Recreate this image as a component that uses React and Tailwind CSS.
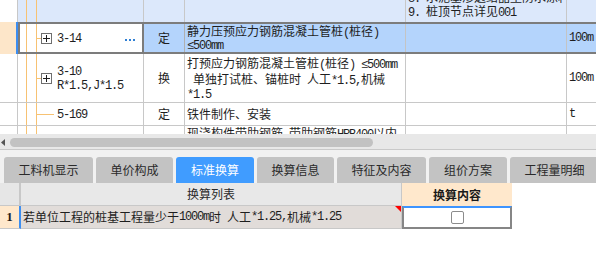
import React from "react";

const MONO =
  "[font-family:'Liberation_Mono',monospace] text-[12px] tracking-[-1.2px] whitespace-pre";

function T({ t }) {
  const parts = t.split(/([\x20-\x7E\u2264]+)/);
  return (
    <>
      {parts.map((p, i) =>
        i % 2 === 1 ? (
          <span key={i} className={MONO}>
            {p}
          </span>
        ) : (
          <React.Fragment key={i}>{p}</React.Fragment>
        )
      )}
    </>
  );
}

function PlusBox() {
  return (
    <svg width="11" height="11" viewBox="0 0 11 11" className="shrink-0">
      <rect x="0.5" y="0.5" width="10" height="10" fill="white" stroke="#6e6e6e" />
      <path d="M2 5.5H9M5.5 2V9" stroke="#1e1e1e" strokeWidth="1" />
    </svg>
  );
}

function Tree({ sel, children }) {
  return (
    <div className="flex h-full w-full">
      <div
        className={`${sel ? "w-[7px]" : "w-[9px]"} shrink-0 border-r border-[#f7c273]`}
      />
      <div className="w-[10px] shrink-0 border-r border-[#f7c273]" />
      {children}
    </div>
  );
}

const B = "border-[#c8c8c8]";

function Tab({ w, active, children }) {
  return (
    <div
      className={`${w} h-[26px] shrink-0 rounded-t-[3px] flex items-center justify-center ${
        active ? "bg-[#409cff] text-white" : "bg-[#c3c3c3] text-[#2a2a2a]"
      }`}
    >
      {children}
    </div>
  );
}

export default function App() {
  return (
    <div className="w-[596px] h-[276px] overflow-hidden bg-white text-[#1e1e1e] text-[12px] [font-family:'Noto_Sans_CJK_SC',sans-serif] flex flex-col">
      {/* top grid */}
      <div className="h-[134px] shrink-0 overflow-hidden flex flex-col">
        {/* row 0 (scrolled, partly visible) */}
        <div className="flex h-[22px] shrink-0">
          <div className={`w-[18px] shrink-0 border-r ${B} bg-white`} />
          <div className="flex flex-1 bg-[#dce8fb]">
            <div className={`w-[126px] shrink-0 border-r ${B}`}>
              <Tree />
            </div>
            <div className={`w-[41px] shrink-0 border-r ${B}`} />
            <div className={`w-[221px] shrink-0 border-r ${B}`} />
            <div
              className={`w-[161px] shrink-0 border-r ${B} overflow-hidden flex flex-col justify-end pb-[4px] pl-[2px]`}
            >
              <div className="h-[15px] leading-[15px] whitespace-nowrap shrink-0">
                <T t="8. 水泥基渗透结晶型防水涂料" />
              </div>
              <div className="h-[14px] leading-[14px] whitespace-nowrap shrink-0">
                <T t="9. 桩顶节点详见001" />
              </div>
            </div>
            <div className="flex-1" />
          </div>
        </div>

        {/* selected row 3-14 */}
        <div className="flex h-[32px] shrink-0">
          <div className="w-[18px] shrink-0 bg-[#fde6c9] border-r-2 border-[#3c8df0]" />
          <div className="w-[126px] shrink-0 border-2 border-[#7c7c7c] bg-white">
            <Tree sel>
              <div className="flex items-center flex-1">
                <div className="w-[4px] h-px bg-[#f7c273] shrink-0" />
                <PlusBox />
                <div className="ml-[5px] leading-[14px]">
                  <T t="3-14" />
                </div>
                <div className="flex-1" />
                <div className="flex gap-[2px] mr-[7px] mt-[3px]">
                  <div className="w-[2px] h-[2px] bg-[#2f7fd3]" />
                  <div className="w-[2px] h-[2px] bg-[#2f7fd3]" />
                  <div className="w-[2px] h-[2px] bg-[#2f7fd3]" />
                </div>
              </div>
            </Tree>
          </div>
          <div className="flex flex-1 bg-[#b4d4fc] border-y-2 border-[#7c7c7c]">
            <div className="w-[41px] shrink-0 border-r border-[#b0b0b0] flex items-center justify-center">
              定
            </div>
            <div className="w-[221px] shrink-0 border-r border-[#c4c4c4] pl-[2px] whitespace-nowrap overflow-hidden">
              <div className="h-[14px] leading-[14px]">
                <T t="静力压预应力钢筋混凝土管桩(桩径)" />
              </div>
              <div className="h-[12px] leading-[12px]">
                <T t="≤500mm" />
              </div>
            </div>
            <div className="w-[161px] shrink-0 border-r border-[#c4c4c4]" />
            <div className="flex-1 flex items-center pl-[2px]">
              <T t="100m" />
            </div>
          </div>
        </div>

        {/* row 3-10 */}
        <div className={`flex h-[49px] shrink-0 border-b ${B}`}>
          <div className={`w-[18px] shrink-0 border-r ${B}`} />
          <div className={`w-[126px] shrink-0 border-r ${B}`}>
            <Tree>
              <div className="flex items-center flex-1">
                <div className="w-[4px] h-px bg-[#f7c273] shrink-0" />
                <PlusBox />
                <div className="ml-[5px] mb-[2px]">
                  <div className="h-[14px] leading-[14px]">
                    <T t="3-10" />
                  </div>
                  <div className="h-[14px] leading-[14px]">
                    <T t="R*1.5,J*1.5" />
                  </div>
                </div>
              </div>
            </Tree>
          </div>
          <div className={`w-[41px] shrink-0 border-r ${B} flex items-center justify-center`}>
            换
          </div>
          <div className={`w-[221px] shrink-0 border-r ${B} pl-[2px] whitespace-nowrap overflow-hidden`}>
            <div className="h-[17px] leading-[17px]">
              <T t="打预应力钢筋混凝土管桩(桩径) ≤500mm" />
            </div>
            <div className="h-[15px] leading-[15px]">
              <T t=" 单独打试桩、锚桩时 人工*1.5,机械" />
            </div>
            <div className="h-[14px] leading-[14px]">
              <T t="*1.5" />
            </div>
          </div>
          <div className={`w-[161px] shrink-0 border-r ${B}`} />
          <div className="flex-1 flex items-center pl-[2px]">
            <T t="100m" />
          </div>
        </div>

        {/* row 5-169 */}
        <div className={`flex h-[23px] shrink-0 border-b ${B}`}>
          <div className={`w-[18px] shrink-0 border-r ${B}`} />
          <div className={`w-[126px] shrink-0 border-r ${B}`}>
            <Tree>
              <div className="flex items-center flex-1">
                <div className="w-[17px] h-px bg-[#f7c273] shrink-0" />
                <div className="ml-[3px]">
                  <T t="5-169" />
                </div>
              </div>
            </Tree>
          </div>
          <div className={`w-[41px] shrink-0 border-r ${B} flex items-center justify-center`}>
            定
          </div>
          <div className={`w-[221px] shrink-0 border-r ${B} pl-[2px] flex items-center whitespace-nowrap overflow-hidden`}>
            <T t="铁件制作、安装" />
          </div>
          <div className={`w-[161px] shrink-0 border-r ${B}`} />
          <div className="flex-1 flex items-center pl-[2px]">
            <T t="t" />
          </div>
        </div>

        {/* partial row */}
        <div className="flex flex-1 min-h-[20px]">
          <div className={`w-[18px] shrink-0 border-r ${B}`} />
          <div className={`w-[126px] shrink-0 border-r ${B}`}>
            <Tree />
          </div>
          <div className={`w-[41px] shrink-0 border-r ${B}`} />
          <div className={`w-[221px] shrink-0 border-r ${B} pl-[2px] whitespace-nowrap overflow-hidden`}>
            <div className="h-[14px] leading-[14px]">
              <T t="现浇构件带肋钢筋 带肋钢筋HRB400以内" />
            </div>
          </div>
          <div className={`w-[161px] shrink-0 border-r ${B}`} />
          <div className="flex-1" />
        </div>
      </div>

      {/* horizontal scrollbar */}
      <div className="h-[16px] shrink-0 bg-[#e8e8e8] border-b border-[#c9c9c9] flex items-center">
        <svg width="5" height="7" viewBox="0 0 5 7" className="ml-[1px] mt-[1px] shrink-0">
          <polygon points="4,0 0,3.5 4,7" fill="#555" />
        </svg>
        <div className="ml-[4px] w-[363px] h-[9px] rounded-full bg-[#c2c2c2] mt-[1px]" />
      </div>

      {/* tabs */}
      <div className="h-[33px] shrink-0 bg-[#f1f1f1] pt-[7px] pl-[4px] flex gap-[3px] overflow-hidden">
        <Tab w="w-[89px]">工料机显示</Tab>
        <Tab w="w-[77px]">单价构成</Tab>
        <Tab w="w-[78px]" active>
          标准换算
        </Tab>
        <Tab w="w-[77px]">换算信息</Tab>
        <Tab w="w-[89px]">特征及内容</Tab>
        <Tab w="w-[78px]">组价方案</Tab>
        <Tab w="w-[89px]">工程量明细</Tab>
      </div>

      {/* bottom table header */}
      <div className="flex h-[23px] shrink-0">
        <div className={`w-[21px] shrink-0 bg-[#e6e6e6] border-r-2 border-b ${B}`} />
        <div className={`w-[381px] shrink-0 bg-[#e8e8e8] border-r border-b ${B} flex items-center justify-center text-[#2a2a2a]`}>
          换算列表
        </div>
        <div className="w-[110px] shrink-0 bg-[#ffe8cc] flex items-center justify-center font-bold text-[#1a1a1a]">
          换算内容
        </div>
        <div className="flex-1 bg-white" />
      </div>

      {/* row 1 */}
      <div className="flex h-[23px] shrink-0">
        <div className={`w-[21px] shrink-0 bg-[#ffe8cc] border-r-2 border-r-[#3d8ef0] border-b ${B} flex items-center justify-center [font-family:'Liberation_Serif',serif] font-bold text-[13px]`}>
          1
        </div>
        <div className={`relative w-[381px] shrink-0 bg-[#e1dcd9] border-r border-b ${B} flex items-center pl-[2px] whitespace-nowrap overflow-hidden`}>
          <T t="若单位工程的桩基工程量少于1000m时 人工*1.25,机械*1.25" />
          <div className="absolute top-0 right-0 w-[6px] h-[6px] bg-[#ff0000] [clip-path:polygon(0_0,100%_0,100%_100%)]" />
        </div>
        <div className="w-[110px] shrink-0 bg-white border-x-2 border-b-2 border-[#868686] border-t-2 border-t-[#3d94ff] flex items-center justify-center">
          <div className="w-[13px] h-[13px] rounded-[2px] border border-[#8c8c8c] bg-white" />
        </div>
        <div className="flex-1 bg-white" />
      </div>

      <div className="flex-1 bg-white" />
    </div>
  );
}
